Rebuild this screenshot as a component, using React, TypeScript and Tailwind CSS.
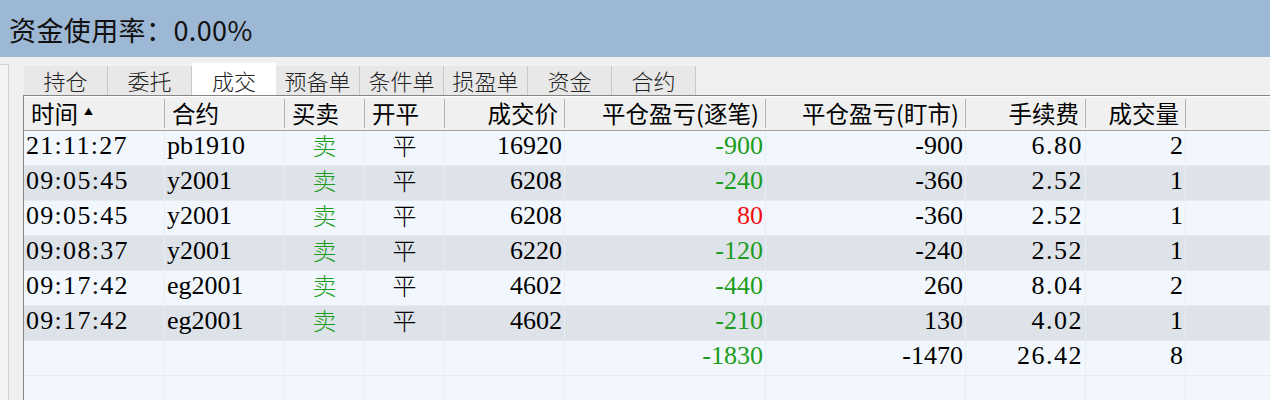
import React from "react";

type Row = {
  time: string;
  code: string;
  side: string;
  oc: string;
  price: string;
  pnl: string;
  pnlColor: "green" | "red";
  mtm: string;
  fee: string;
  qty: string;
};

const cols = [
  { title: "时间", w: "w-[141px]", align: "left" },
  { title: "合约", w: "w-[120px]", align: "left" },
  { title: "买卖", w: "w-[80px]", align: "left" },
  { title: "开平", w: "w-[80px]", align: "left" },
  { title: "成交价", w: "w-[120px]", align: "right" },
  { title: "平仓盈亏(逐笔)", w: "w-[201px]", align: "right" },
  { title: "平仓盈亏(盯市)", w: "w-[200px]", align: "right" },
  { title: "手续费", w: "w-[120px]", align: "right" },
  { title: "成交量", w: "w-[100px]", align: "right" },
];

const rows: Row[] = [
  { time: "21:11:27", code: "pb1910", side: "卖", oc: "平", price: "16920", pnl: "-900", pnlColor: "green", mtm: "-900", fee: "6.80", qty: "2" },
  { time: "09:05:45", code: "y2001", side: "卖", oc: "平", price: "6208", pnl: "-240", pnlColor: "green", mtm: "-360", fee: "2.52", qty: "1" },
  { time: "09:05:45", code: "y2001", side: "卖", oc: "平", price: "6208", pnl: "80", pnlColor: "red", mtm: "-360", fee: "2.52", qty: "1" },
  { time: "09:08:37", code: "y2001", side: "卖", oc: "平", price: "6220", pnl: "-120", pnlColor: "green", mtm: "-240", fee: "2.52", qty: "1" },
  { time: "09:17:42", code: "eg2001", side: "卖", oc: "平", price: "4602", pnl: "-440", pnlColor: "green", mtm: "260", fee: "8.04", qty: "2" },
  { time: "09:17:42", code: "eg2001", side: "卖", oc: "平", price: "4602", pnl: "-210", pnlColor: "green", mtm: "130", fee: "4.02", qty: "1" },
];

const tabs = ["持仓", "委托", "成交", "预备单", "条件单", "损盈单", "资金", "合约"];

const serif = "font-['Liberation_Serif','Noto_Sans_CJK_SC',serif]";
const cjk = "font-['Noto_Sans_CJK_SC','Noto_Sans',sans-serif]";

function Cell({ w, className = "", children }: { w: string; className?: string; children?: React.ReactNode }) {
  return (
    <div className={`${w} shrink-0 h-full flex items-center pb-[6px] border-r border-[#e9edf2] ${className}`}>
      {children}
    </div>
  );
}

function DataRow({ r, dark }: { r: Row; dark: boolean }) {
  return (
    <div className={`flex h-[35px] border-b border-[#e6ebf0] ${dark ? "bg-[#dee3ea]" : "bg-[#f1f7fd]"}`}>
      <Cell w="w-[141px]" className={`pl-[2px] ${serif} text-[26px] tracking-[1.3px]`}>{r.time}</Cell>
      <Cell w="w-[120px]" className={`pl-[2px] ${serif} text-[26px]`}>{r.code}</Cell>
      <Cell w="w-[80px]" className={`justify-center ${cjk} font-light text-[24px] text-[#1c9c1c]`}>{r.side}</Cell>
      <Cell w="w-[80px]" className={`justify-center ${cjk} font-light text-[24px]`}>{r.oc}</Cell>
      <Cell w="w-[120px]" className={`justify-end pr-[2px] ${serif} text-[26px]`}>{r.price}</Cell>
      <Cell
        w="w-[201px]"
        className={`justify-end pr-[2px] ${serif} text-[26px] ${r.pnlColor === "red" ? "text-[#f01010]" : "text-[#1c9c1c]"}`}
      >
        {r.pnl}
      </Cell>
      <Cell w="w-[200px]" className={`justify-end pr-[2px] ${serif} text-[26px]`}>{r.mtm}</Cell>
      <Cell w="w-[120px]" className={`justify-end pr-[2px] ${serif} text-[26px] tracking-[1.5px]`}>{r.fee}</Cell>
      <Cell w="w-[100px]" className={`justify-end pr-[2px] ${serif} text-[26px]`}>{r.qty}</Cell>
      <div className="flex-1" />
    </div>
  );
}

export default function App() {
  return (
    <div className="w-[1270px] h-[400px] overflow-hidden bg-[#f0f0f0] text-black">
      {/* usage bar */}
      <div className={`h-[57px] bg-[#9db8d4] flex items-center pl-[9px] pt-[4px] ${cjk} text-[27px] tracking-[0.4px] text-[#111]`}>
        资金使用率：0.00%
      </div>

      <div className="flex h-[343px]">
        {/* collapsed side panel */}
        <div className="w-[9px] mt-[7px] border-t border-r border-[#d4d4d4] bg-[#f3f3f3]" />

        <div className="ml-[14px] flex-1 flex flex-col">
          {/* tabs */}
          <div className="h-[38px] flex items-end pl-[1px]">
            {tabs.map((t) =>
              t === "成交" ? (
                <div
                  key={t}
                  className={`w-[84px] h-[32px] bg-white flex items-center justify-center pt-[2px] ${cjk} font-light text-[22px] text-[#222]`}
                >
                  {t}
                </div>
              ) : (
                <div
                  key={t}
                  className={`w-[84px] h-[29px] bg-[#e8e8e8] border-r border-[#c9c9c9] flex items-center justify-center ${cjk} font-light text-[22px] text-[#222]`}
                >
                  {t}
                </div>
              )
            )}
          </div>

          {/* grid */}
          <div className="flex-1 border-l border-t border-[#858585] bg-[#f1f7fd] overflow-hidden">
            <div className="flex h-[35px] bg-[#f0f0f0] border-t border-white border-b border-b-[#a3a3a3]">
              {cols.map((c, i) => (
                <div
                  key={c.title}
                  className={`${c.w} shrink-0 my-[2px] border-r border-[#b3b3b3] flex items-center ${
                    c.align === "right" ? "justify-end pr-[6px]" : "pl-[7px]"
                  } ${cjk} text-[23.5px] text-black`}
                >
                  {c.title}
                  {i === 0 && <span className="ml-[6px] text-[9px] leading-none mb-[4px]">▲</span>}
                </div>
              ))}
              <div className="flex-1" />
            </div>

            {rows.map((r, i) => (
              <DataRow key={i} r={r} dark={i % 2 === 1} />
            ))}

            {/* totals */}
            <div className={`flex h-[35px] border-b border-[#e6ebf0] bg-[#f1f7fd] ${serif} text-[26px]`}>
              <Cell w="w-[141px]" />
              <Cell w="w-[120px]" />
              <Cell w="w-[80px]" />
              <Cell w="w-[80px]" />
              <Cell w="w-[120px]" />
              <Cell w="w-[201px]" className="justify-end pr-[2px] text-[#1c9c1c]">-1830</Cell>
              <Cell w="w-[200px]" className="justify-end pr-[2px]">-1470</Cell>
              <Cell w="w-[120px]" className="justify-end pr-[2px] tracking-[1.5px]">26.42</Cell>
              <Cell w="w-[100px]" className="justify-end pr-[2px]">8</Cell>
              <div className="flex-1" />
            </div>

            <div className="flex h-[35px] bg-[#f1f7fd]">
              <Cell w="w-[141px]" />
              <Cell w="w-[120px]" />
              <Cell w="w-[80px]" />
              <Cell w="w-[80px]" />
              <Cell w="w-[120px]" />
              <Cell w="w-[201px]" />
              <Cell w="w-[200px]" />
              <Cell w="w-[120px]" />
              <Cell w="w-[100px]" />
              <div className="flex-1" />
            </div>
          </div>
        </div>
      </div>
    </div>
  );
}
